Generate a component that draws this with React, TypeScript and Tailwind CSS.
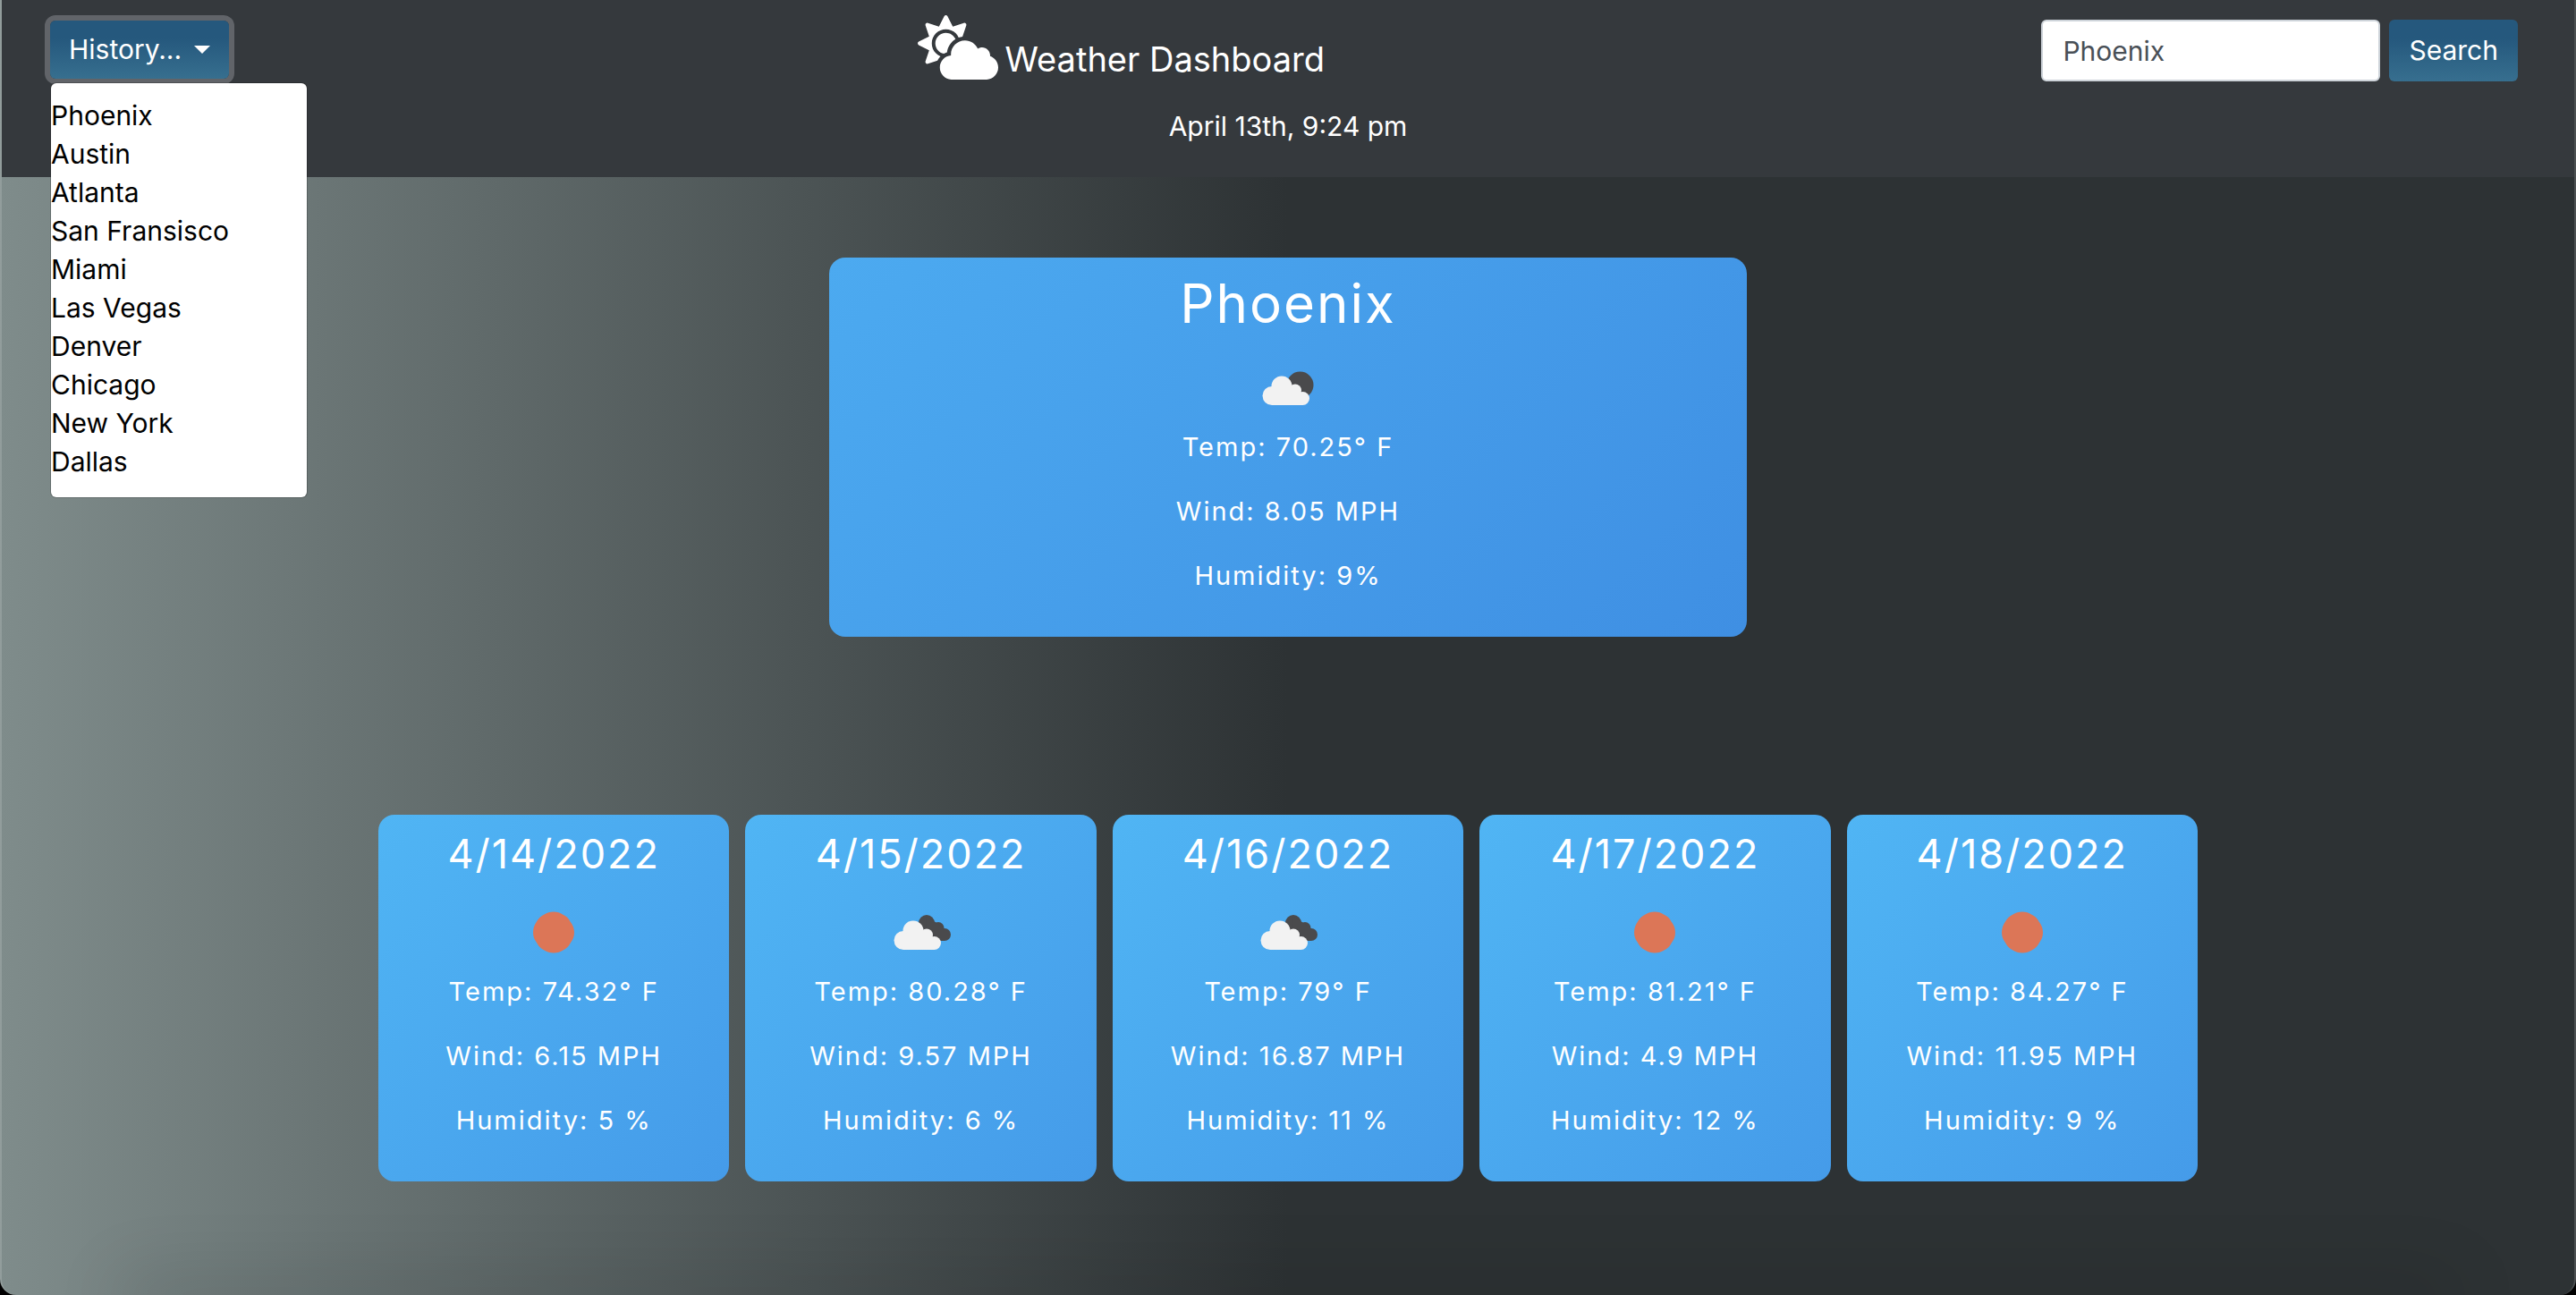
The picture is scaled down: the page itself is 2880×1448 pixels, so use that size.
import { useState } from "react";
import { FaCloudSun } from "react-icons/fa";

type Sky = "clear" | "few" | "broken";

type Forecast = {
  title: string;
  sky: Sky;
  temp: string;
  wind: string;
  humidity: string;
};

const history = [
  "Phoenix",
  "Austin",
  "Atlanta",
  "San Fransisco",
  "Miami",
  "Las Vegas",
  "Denver",
  "Chicago",
  "New York",
  "Dallas",
];

const current: Forecast = { title: "Phoenix", sky: "few", temp: "70.25", wind: "8.05", humidity: "9%" };

const forecast: Forecast[] = [
  { title: "4/14/2022", sky: "clear", temp: "74.32", wind: "6.15", humidity: "5 %" },
  { title: "4/15/2022", sky: "broken", temp: "80.28", wind: "9.57", humidity: "6 %" },
  { title: "4/16/2022", sky: "broken", temp: "79", wind: "16.87", humidity: "11 %" },
  { title: "4/17/2022", sky: "clear", temp: "81.21", wind: "4.9", humidity: "12 %" },
  { title: "4/18/2022", sky: "clear", temp: "84.27", wind: "11.95", humidity: "9 %" },
];

function FrontCloud() {
  return (
    <g fill="#f2f2f2">
      <circle cx="27" cy="54.5" r="10.5" />
      <circle cx="38" cy="44" r="11.5" />
      <circle cx="53" cy="48.5" r="7" />
      <circle cx="61.5" cy="57.5" r="7.5" />
      <path d="M27 65H61.5V52L53 45L38 40L27 50Z" />
    </g>
  );
}

function SkyIcon({ sky }: { sky: Sky }) {
  return (
    <svg viewBox="0 0 90 90" className="mx-auto size-[90px]" aria-hidden="true">
      {sky === "clear" && (
        <path
          d="M45 22.500Q51 22.500 55 25.500Q61 28 63.500 33.500Q68 39 68 45.500Q68 52 64 57Q61 63 55.500 65.500Q51 68.500 45 68.500Q39 68.500 34.500 65.500Q29 63 26 57Q22 52 22 45.500Q22 39 26 33.500Q29 28 34.500 25.500Q39 22.500 45 22.500Z"
          fill="#dc7657"
        />
      )}
      {sky === "few" && (
        <>
          <circle cx="58.5" cy="42.5" r="15" fill="#4a4a4c" />
          <FrontCloud />
        </>
      )}
      {sky === "broken" && (
        <>
          <g fill="#4a4a4c">
            <circle cx="51" cy="35" r="9" />
            <circle cx="64" cy="40.5" r="6.5" />
            <circle cx="71" cy="48" r="7" />
            <path d="M51 28L64 36L71 42V55H50Z" />
          </g>
          <g transform="translate(-2 0)">
            <FrontCloud />
          </g>
        </>
      )}
    </svg>
  );
}

function Readings({ day }: { day: Forecast }) {
  return (
    <>
      <SkyIcon sky={day.sky} />
      <p className="mb-[29px]">Temp: {day.temp}° F</p>
      <p className="mb-[29px]">Wind: {day.wind} MPH</p>
      <p className="mb-[29px]">Humidity: {day.humidity}</p>
    </>
  );
}

export default function App() {
  const [open, setOpen] = useState(true);
  const [city, setCity] = useState("Phoenix");

  return (
    <div className="min-h-screen bg-black font-[Inter,sans-serif] text-white">
      <div className="relative min-h-screen overflow-hidden rounded-b-[18px] border-x-2 border-white/15 bg-[linear-gradient(90deg,#7f8c8b_0%,#2d3234_50%,#2d3234_100%)] bg-origin-border">
        <header className="bg-[#35393d] pt-[17px] pr-[63px] pb-[35px] pl-[54px] text-[30px] leading-[43px]">
          <div className="flex items-start justify-between">
            <div className="relative pt-[6px]">
              <button
                type="button"
                aria-haspopup="menu"
                aria-expanded={open}
                onClick={() => setOpen(!open)}
                className="flex items-center gap-[14px] rounded-[6px] bg-linear-to-b from-[#25587d] from-30% to-[#376f8f] px-[21px] py-[11px] ring-6 ring-[#616469]"
              >
                History...
                <span className="border-x-9 border-t-9 border-x-transparent border-t-white" />
              </button>
              {open && (
                <ul
                  role="menu"
                  className="absolute top-[76px] left-px z-10 w-[286px] rounded-[6px] bg-white pt-[15px] pb-[18px] text-black shadow-[0_0_0_1px_rgba(0,0,0,0.2)]"
                >
                  {history.map((name) => (
                    <li key={name} role="none">
                      <button
                        type="button"
                        role="menuitem"
                        onClick={() => setCity(name)}
                        className="block w-full text-left"
                      >
                        {name}
                      </button>
                    </li>
                  ))}
                </ul>
              )}
            </div>
            <h1 className="flex items-start gap-2 pr-8 text-[38px]">
              <FaCloudSun className="h-[72px] w-[90px]" aria-hidden="true" />
              <span className="pt-7">Weather Dashboard</span>
            </h1>
            <form className="flex gap-[10px] pt-[5px]" onSubmit={(e) => e.preventDefault()}>
              <input
                type="text"
                aria-label="City"
                value={city}
                onChange={(e) => setCity(e.target.value)}
                className="h-[69px] w-[379px] rounded-[6px] border-2 border-[#ced4da] bg-white px-[22px] text-[#495057] outline-none"
              />
              <button
                type="submit"
                className="rounded-[6px] bg-linear-to-b from-[#25587d] from-30% to-[#376f8f] px-[22px]"
              >
                Search
              </button>
            </form>
          </div>
          <p className="mt-[29px] text-center">
            <time dateTime="2022-04-13T21:24" className="pl-[9px]">
              April 13th, 9:24 pm
            </time>
          </p>
        </header>

        <main className="flex flex-col items-center gap-[199px] px-8 pt-[90px] pb-[126px] text-center text-[29px] leading-[43px] tracking-[2px]">
          <section className="w-full max-w-[1026px] rounded-[18px] bg-linear-135 from-[#4caaf0] to-[#3f8fe3] pt-[17px] pb-[18px]">
            <h2 className="mb-[14px] text-[60px] leading-[69px]">{current.title}</h2>
            <Readings day={current} />
          </section>
          <section className="grid w-full max-w-[2034px] grid-cols-5 gap-[18px]">
            {forecast.map((day) => (
              <article
                key={day.title}
                className="rounded-[18px] bg-linear-135 from-[#50b5f4] to-[#459be9] pt-4 pb-[18px]"
              >
                <h3 className="mb-[14px] text-[45px] leading-[56px]">{day.title}</h3>
                <Readings day={day} />
              </article>
            ))}
          </section>
        </main>
        <div className="pointer-events-none absolute inset-x-36 -bottom-2 h-2 shadow-[0_0_80px_10px_rgba(0,0,0,0.22)]" />
      </div>
    </div>
  );
}
